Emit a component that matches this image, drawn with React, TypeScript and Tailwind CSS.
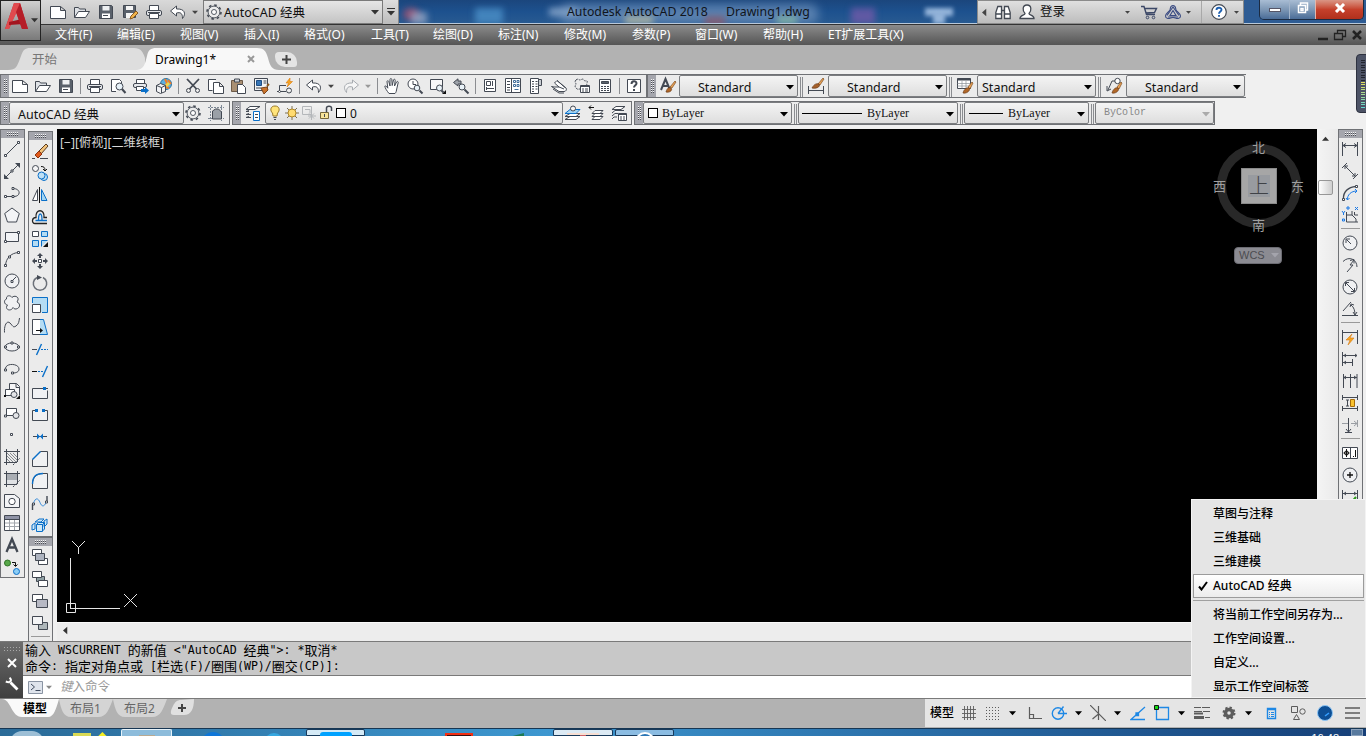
import type { ReactNode } from "react";
import clsx from "clsx";

const INK = "#434953";
const BLUE = "#0a6fc8";

const icons: Record<string, ReactNode> = {
  new: <path d="M.5 2.5h10l5 4v8H.5zM10.5 2.5v4h5" fill="#fff" />,
  open: (
    <>
      <path d="M.5 13.5v-10h4l1 1.500h6v3" fill="#dfe2e6" />
      <path d="M.5 13.500 4.500 7.500h11l-4 6z" fill="#fff" />
    </>
  ),
  save: (
    <>
      <path d="M1.500 1.500h12l1 1v12h-13z" fill="#5a616b" />
      <path d="M4.500 2h7v4.500h-7z" fill="#eef0f2" stroke="none" />
      <path d="M4 9.500h8V14H4z" fill="#fff" stroke="none" />
      <path d="M5 11.500h5" />
    </>
  ),
  saveAs: (
    <>
      <path d="M1.500 1.500h12v12h-12z" fill="#5a616b" />
      <path d="M4 2h7v4H4zM4 9h7v5H4z" fill="#f5f5f5" stroke="none" />
      <path d="m8 15 1-3 5-5 2 2-5 5z" fill="#f0b44c" stroke="#8a5a20" />
    </>
  ),
  print: (
    <>
      <path d="M3.500 6V1.500h9V6" fill="#fff" />
      <rect x=".5" y="6.500" width="15" height="5" rx="1.500" fill="#e7e9ec" />
      <path d="M3.500 9.500h9v5h-9z" fill="#fff" />
      <path d="M2 8.500h12" />
    </>
  ),
  preview: (
    <>
      <path d="M11.500 6V3.500l-2-2h-8v12H6" fill="#fff" />
      <circle cx="9.500" cy="8.500" r="3.500" fill="#e7f1f8" />
      <path d="m12 11 3.500 4" strokeWidth="2" />
    </>
  ),
  plot: (
    <>
      <path d="M3.500 5V1.500h8V5" fill="#fff" />
      <rect x=".5" y="5.500" width="13" height="4" rx="1.500" fill="#e7e9ec" />
      <path d="M3.500 8.500h7v4h-7z" fill="#fff" />
      <path d="M8 11h4V9l4 3.500-4 3.500v-2H8z" fill={BLUE} stroke="none" />
    </>
  ),
  publish: (
    <>
      <circle cx="10" cy="6" r="5.500" fill="#5eb0e0" stroke="#2574a6" />
      <path d="M9 1l2 4-2 4 4 1M12 2l3 4" stroke="#f07c28" strokeWidth="2" />
      <path d="M10 8l3-3" stroke="#ecd44a" strokeWidth="3" />
      <path d="m.5 7.500 4-2 5 2v6l-5 2-4-2zM.5 7.500l5 2v5.500M5.500 9.500l4-2" fill="#f1f2f4" />
    </>
  ),
  cut: (
    <>
      <path d="m2 1 9.500 10M14 1 4.500 11" strokeWidth="1.800" />
      <circle cx="3.500" cy="12.500" r="2" />
      <circle cx="12.500" cy="12.500" r="2" />
    </>
  ),
  copy: (
    <>
      <path d="M8 1.500H.5v11h4" fill="#fff" />
      <path d="M5.500 4.500h6l4 4v7h-10zM11.500 4.500v4h4" fill="#fff" />
    </>
  ),
  paste: (
    <>
      <path d="M.5 2.500h11v11H.5z" fill="#a98f72" stroke="#6c5a48" />
      <path d="M3.500 1h5v3h-5z" fill="#cfd3d8" />
      <path d="M6.500 6.500h5l3 3v6h-8z" fill="#fff" />
    </>
  ),
  match: (
    <>
      <path d="M.5.5h13v12H.5z" fill="#f1f3f5" />
      <path d="M2.500 2.500h5v5h-5z" fill="#3675b5" stroke="#1d4d84" />
      <path d="M9.500 3h3M9.500 5h3M2 10h5" />
      <path d="m13 8 2-2" stroke="#8a5a20" strokeWidth="2" />
      <path d="M7 10l6-1 1 3-4 4z" fill="#c9732a" stroke="#7c441a" />
    </>
  ),
  blockEdit: (
    <>
      <path d="M9 7.500H2.500v6H9M2.500 13.500H0" />
      <circle cx="2.500" cy="13.500" r="1" fill="#fff" />
      <circle cx="12" cy="12.500" r="2.500" fill="#eee" />
      <path d="m13 0-4 5h2.500L10 9l5.500-5.500H13z" fill="#f7a521" stroke="#d87b10" strokeWidth=".6" />
    </>
  ),
  undo: <path d="M6.500 2 .5 7l6 5V9c4-1 6 0 6 5.500 4-5 2-10-6-9.500z" fill="#fff" />,
  redo: <path d="M9.500 2l6 5-6 5V9c-4-1-6 0-6 5.500-4-5-2-10 6-9.500z" fill="#f6f6f6" stroke="#a7abb0" />,
  pan: (
    <path
      d="M5 15.500C3 13 1 10 .8 8.200c.8-.7 2 .3 3 2L3 3.500C3 2.500 4.500 2.500 4.800 3.500L6 8V1.500c0-1.300 1.700-1.300 1.800 0L8.200 7.500 9.500 2c.3-1.200 1.900-.9 1.700.4L10.500 8l2-4c.6-1 2-.5 1.700.6L12.500 12c-.2 2-1 3-1.500 3.500z"
      fill="#fff"
    />
  ),
  zoomRt: (
    <>
      <circle cx="6" cy="6" r="5" fill="#fff" />
      <path d="M6 3v3.500h3" />
      <circle cx="10" cy="10" r="2.800" fill="#e9f2f8" />
      <path d="m12.500 12.500 3 3" strokeWidth="2" />
    </>
  ),
  zoomWin: (
    <>
      <path d="M.5 1.500h12v10H.5z" fill="#f7f7f8" />
      <circle cx="9.500" cy="10" r="3" fill="#e9f2f8" />
      <path d="m11.500 12.500 2 2" strokeWidth="2" />
      <path d="M16 12v4h-4z" fill="#111" stroke="none" />
    </>
  ),
  zoomPrev: (
    <>
      <path d="M5 .8.5 4.500 5 8V6h3V3H5z" fill="#9da2a9" />
      <circle cx="9" cy="9" r="3" fill="#e9f2f8" />
      <path d="m11.500 11.500 4 4" strokeWidth="2" />
    </>
  ),
  props: (
    <>
      <path d="M2.500 1.500h11v12h-11z" fill="#fff" />
      <path d="M4.500 3.500h4v4h-4zM10.500 3v5M4 10.500h8M4.500 9v3" />
    </>
  ),
  designCenter: (
    <>
      <path d="M.5.5h15v14H.5zM6.500.5v14" fill="#fff" />
      <path d="M2 3.500h3M2 6.500h3M2 9.500h3M2 12h3" />
      <path d="M8.500 2.500h2v2h-2zM12 2.500h2v2h-2zM8.500 6.500h2v2h-2zM12 6.500h2v2h-2zM9.500 11.500h4" stroke="#3f6c9a" />
    </>
  ),
  palettes: (
    <>
      <path d="M2.500.5h8v15h-8z" fill="#fff" />
      <path d="M10.500 1.500h3v6h-3z" fill="#c9cdd2" />
      <path d="M4 3.500h2M7.500 3.500h2M4 6h2M7.500 6h2M4 8.500h2M7.500 8.500h2M4 11h2M7.500 11h2M4 13.500h2" />
    </>
  ),
  sheetSet: (
    <>
      <path d="M.5 8.500 8 13.500h5c2 0 3-2 2-3.500L6 2.500 3.500 5 8 9H3z" fill="#fff" />
      <path d="m6 2.500 8 7M2 11l6 4h5M8 9l5 2" />
    </>
  ),
  markup: (
    <>
      <path d="M2 2c2-2 3 0 4 0s3-2 4 0 2 0 3 1-1 3 0 4M2 2c-2 2 0 3 0 4s-2 2 0 4 2 1 4 1" strokeDasharray="2 1" />
      <path d="M6.500 7.500h9v7h-9z" fill="#fff" />
      <path d="M6.500 8.500h9M8 11h2M11 11h3M8 13h2M11 13h3" />
    </>
  ),
  calc: (
    <>
      <path d="M2.500 1.500h11v13h-11z" fill="#fff" />
      <path d="M4.500 3.500h7v2h-7z" fill="#59616b" />
      <path d="M4 8.500h8M4 10.500h8M4 12.500h8" strokeDasharray="2 1" />
    </>
  ),
  help: (
    <>
      <path d="M1.500 1.500h13v13h-13z" fill="#fff" />
      <path d="M5.500 6c0-3.500 5-3.500 5-.500 0 1.500-2.500 2-2.500 4M8 11v2" strokeWidth="2" />
    </>
  ),
  textStyle: (
    <>
      <path d="M1 12 5.500 1l4.500 11M3 8h5" strokeWidth="2" />
      <path d="m10 9 5-6 1 1-4 6z" fill="#e9a256" stroke="#7d4c20" strokeWidth=".7" />
      <path d="M6 14c1-4 3-5 5-4 2 2-1 5-5 4z" fill="#b06728" stroke="#6b3a15" strokeWidth=".7" />
    </>
  ),
  dimStyle: (
    <>
      <path d="M.5 8v8M15.500 8v8M1 12.500h14" />
      <path d="m10 6 5-6 1 1-4 6z" fill="#e9a256" stroke="#7d4c20" strokeWidth=".7" />
      <path d="M4 10c2-4 5-5 7-4 2 3-3 5-7 4z" fill="#a4602a" stroke="#6b3a15" strokeWidth=".7" />
    </>
  ),
  tableStyle: (
    <>
      <path d="M.5.5h13v10H.5z" fill="#fff" />
      <path d="M.5 1.500h13" strokeWidth="2" />
      <path d="M.5 5.500h13M.5 8h13M5 3v7.500M9 3v7.500" strokeWidth=".7" stroke="#8b9097" />
      <path d="m11 9 4-5 1 1-3 6z" fill="#e9a256" stroke="#7d4c20" strokeWidth=".7" />
      <path d="M6 15c1-4 4-6 6-5 2 2-2 6-6 5z" fill="#b06728" stroke="#6b3a15" strokeWidth=".7" />
    </>
  ),
  leaderStyle: (
    <>
      <circle cx="11.500" cy="3" r="2.700" fill="#fff" />
      <path d="M9 3H6L2 12M1 8v5l4-2" />
      <path d="m11 9 4-5 1 1-3 6z" fill="#e9a256" stroke="#7d4c20" strokeWidth=".7" />
      <path d="M6 15c1-4 4-6 6-5 2 2-2 6-6 5z" fill="#b06728" stroke="#6b3a15" strokeWidth=".7" />
    </>
  ),
  gear: (
    <>
      <circle cx="8" cy="8" r="7" strokeDasharray="2.600 2.900" strokeWidth="1.600" />
      <circle cx="8" cy="8" r="5.900" fill="#ececec" strokeWidth=".9" />
      <circle cx="8" cy="8" r="2.500" fill="#fff" strokeWidth=".9" />
    </>
  ),
  wsSave: (
    <>
      <path d="M2.500 0v16M13.500 0v16M0 2.500h16M0 13.500h16" strokeDasharray="2 1" stroke="#7c8794" />
      <path d="M4.500 14V6l3-2h3l3 3v7z" fill="#9aa0a7" />
    </>
  ),
  layerProps: (
    <>
      <path d="M15 1.500H5l-4 3h9zM4 6.500H1l3-1M1 9.500h5M4 8.500l-3 1M1 12.500h5M4 11.500l-3 1" fill="#fff" />
      <path d="M8.500 6.500h6v9h-6z" fill="#fff" stroke={BLUE} />
      <path d="M10 9.500h3M10 12.500h3" />
    </>
  ),
  layerCur: (
    <>
      <path d="m0 14.500 5-3h10l-4 3zM0 11.500l5-3h10l-4 3z" fill="#fff" />
      <path d="m0 8.500 5-4h10l-4 4z" fill="#9fd2f2" stroke={BLUE} />
      <circle cx="8" cy="3.500" r="2.500" fill="#f4f4f4" />
    </>
  ),
  layerPrev: (
    <>
      <path d="m4 14.500 3-3h8l-3 3zM4 11.500l3-3h8l-3 3zM4 8.500l3-3h8l-3 3z" fill="#fff" />
      <path d="M6 2.500H1M3 .5l-2 2 2 2" stroke="#111" />
    </>
  ),
  layerState: (
    <>
      <path d="M14 1.500H5l-4 3h9zM1 8l3-2.500h9M1 11l3-2.500h3M1 14l2-2h3" fill="#fff" />
      <path d="M7.500 8.500h8v7h-8z" fill="#fff" />
      <path d="M7.500 9.500h8M9 12h2M12 12h2M9 14h2M12 14h2" />
    </>
  ),
  bulb: (
    <>
      <path d="M8 1c5 0 5 5 2.500 7l-.5 3H6l-.5-3C3 6 3 1 8 1z" fill="#ffe47a" stroke="#9b7b2a" />
      <path d="M6.500 12.500h3M7 14.500h2" />
    </>
  ),
  sun: (
    <>
      <path d="M8 1v14M1 8h14M3 3l10 10M13 3 3 13" stroke="#7d7256" />
      <circle cx="8" cy="8" r="4" fill="#ffdb70" stroke="#b28824" />
    </>
  ),
  vpFreeze: (
    <g stroke="#b4b7ba">
      <path d="M1.500 1.500h9v8h-9zM4 4.500h5v4" />
      <path d="M10.500 7v8M7 11h8M8 8.500l5 5M13 8.500l-5 5" />
    </g>
  ),
  lock: (
    <>
      <path d="M8.500 7V3c0-2.500 5-2.500 5 0v3" strokeWidth="1.500" />
      <path d="M2.500 7.500h8v6h-8z" fill="#f8e49a" stroke="#77673a" />
      <path d="M6.500 9v3" />
    </>
  ),
  line: (
    <>
      <path d="M2 14 14 2" />
      <path d="M.5 13.500h2v2h-2zM13.500.5h2v2h-2z" fill="#fff" />
    </>
  ),
  xline: (
    <>
      <path d="M1 15 15 1" />
      <path d="M0 16v-5l5 5zM16 0v5l-5-5z" fill={INK} stroke="none" />
      <path d="M7 7h2v2H7z" fill="#fff" />
    </>
  ),
  pline: (
    <>
      <path d="M2 11.500h7M9 3.500c8 0 8 8 1 8" />
      <path d="M.5 10.500h2v2h-2zM8 10.500h2v2H8zM8 2.500h2v2H8z" fill="#fff" />
    </>
  ),
  polygon: <path d="m8 1 7.300 5.500-2.800 8.500h-9L.7 6.500z" fill="#f3f4f6" />,
  rect: (
    <>
      <path d="M1.500 3.500h13v9h-13z" fill="#f3f4f6" />
      <path d="M.5 11.500h2v2h-2zM13.500 2.500h2v2h-2z" fill="#fff" />
    </>
  ),
  arc: (
    <>
      <path d="M1.500 14.500C2 7 7 2 14.500 1.500" />
      <path d="M.5 13.500h2v2h-2zM4.500 5h2v2h-2zM13.500.5h2v2h-2z" fill="#fff" />
    </>
  ),
  circle: (
    <>
      <circle cx="8" cy="8" r="7" fill="#f0f1f3" />
      <path d="m8 8 4-4M7 7.500h2v2H7z" />
    </>
  ),
  revcloud: (
    <path
      d="M8 2.500c2-2.500 7-1 6 2.500-.2 1-1 1.500-1 2 3 1 3.500 5 .500 6.500-2 1-3.500.500-4.500-1-1 3-6 3.500-6.500 0 0-1 .500-2 1-2.500C0 9.500-.500 5 2.500 4 2 0 6.500 0 8 2.500z"
      fill="#f0f1f3"
    />
  ),
  spline: <path d="M.5 15.500C0 8 3 3 6 6s3 5 6 3 3-5 3.500-8" />,
  ellipse: (
    <>
      <ellipse cx="8" cy="8" rx="7" ry="4" fill="#f0f1f3" />
      <path d="M.5 7h2v2h-2zM7 3h2v2H7zM13.500 7h2v2h-2z" fill="#fff" />
    </>
  ),
  ellipseArc: (
    <>
      <path d="M1.500 9C0 1.500 15 2 15 8c0 3-3 4-6 4" />
      <path d="M.5 8h2v2h-2zM7.500 11h2v2h-2z" fill="#fff" />
    </>
  ),
  insert: (
    <>
      <path d="M5.500 7V.5h7l3 3V12M12 .5v4h3" fill="#f5f5f6" />
      <path d="M1.500 6.500h9v6h-9z" fill="#fff" />
      <circle cx="10" cy="11.500" r="3" fill="#e4e5e8" />
      <path d="M16 12v4h-4zM0 12h2v2H0z" fill="#111" stroke="none" />
    </>
  ),
  block: (
    <>
      <path d="M2.500 3.500h10v7h-10z" fill="#fff" />
      <circle cx="12" cy="10.500" r="3" fill="#e4e5e8" />
      <path d="M.5 10h2v2h-2z" fill="#fff" />
    </>
  ),
  point: <path d="M6.500 6.500h2v2h-2z" fill="#fff" />,
  hatch: (
    <>
      <path d="M2.500 0v16M13.500 0v13M0 2.500h16M0 13.500h13" />
      <path d="m3 10 3 3M3 7l6 6M3 4l9 9M6 4l7 7M9 4l4 4" strokeWidth=".6" />
      <path d="m9 16 7-7" strokeDasharray="2 1" />
    </>
  ),
  gradient: (
    <>
      <path d="M2.500 2.500h11v11h-11z" fill="#a9adb3" stroke="none" />
      <path d="M3 9h10v4H3z" fill="#dfe1e4" stroke="none" />
      <path d="M2.500 0v16M13.500 0v13M0 2.500h16M0 13.500h13" />
      <path d="m9 16 7-7" strokeDasharray="2 1" />
    </>
  ),
  region: (
    <>
      <path d="M.5 1.500h10l5 4v9H.5z" fill="#f3f4f6" />
      <circle cx="8" cy="8.500" r="3.200" fill="#fff" />
    </>
  ),
  table: (
    <>
      <path d="M.5.500h15v15H.5z" fill="#fff" />
      <path d="M1 1h14v3H1z" fill="#8f93a6" stroke="none" />
      <path d="M.5 4.500h15" />
      <path d="M1 8h14M1 11.500h14M5.500 5v10M10.500 5v10" stroke="#a2a6ac" />
    </>
  ),
  mtext: <path d="M2.500 15 8 2l5.500 13M4.500 10.500h7" strokeWidth="2.300" />,
  addSel: (
    <>
      <circle cx="3.500" cy="4" r="3" fill="#58a84a" stroke="#2f7426" />
      <circle cx="12.500" cy="12.500" r="3" fill="#8ccdf5" stroke={BLUE} />
      <path d="M8 3.500h3.500V7M9.500 5.500l2 2 2-2" stroke="#111" />
    </>
  ),
  erase: (
    <>
      <path d="m6 9 8-8 2 2-7 8z" fill="#f2c27a" stroke="#5b3d20" />
      <path d="m3 12 4-4 3 3-4 4z" fill="#e05a1b" stroke="#8b3210" />
      <path d="M0 15.500h3M8 15.500h8" />
    </>
  ),
  copyObj: (
    <>
      <circle cx="3.500" cy="3.500" r="3" fill="#f4f4f5" />
      <path d="M9 1.500c3 0 4 1 4 4M11 4l2 2 2-2" stroke="#111" />
      <g stroke={BLUE} fill="#bfe0f5">
        <circle cx="12" cy="12" r="3.500" />
        <circle cx="9.500" cy="10.500" r="3.500" />
      </g>
    </>
  ),
  mirror: (
    <>
      <path d="M.5 13.500h5v-11z" fill="#fff" />
      <path d="M7.500 0v16" stroke="#111" />
      <path d="M15 13.500H9.500v-11z" fill="#a4d5f2" stroke={BLUE} />
    </>
  ),
  offset: (
    <>
      <path d="M15 14.500H3C-.500 14.500-.500 8.500 4 8.500c-1-9 9-9 8 0h3" strokeWidth="1.300" stroke="#222" />
      <path d="M15 11.500H3.500M6.500 11c0-8 3.500-8 3.500 0" stroke={BLUE} strokeWidth="1.300" />
    </>
  ),
  array: (
    <>
      <path d="M.5.500h6v5h-6z" fill="#fff" />
      <path d="M9.500.500h6v5h-6zM.5 9.500h6v6h-6zM9.500 15.500v-6h6" fill="#b5dcf3" stroke={BLUE} />
      <path d="M16 11v5h-5z" fill="#111" stroke="none" />
    </>
  ),
  move: (
    <>
      <path d="M6.500 6.500h3v3h-3z" fill="#fff" />
      <path d="m8 0 3 3H9v2H7V3H5zM8 16l3-3H9v-2H7v2H5zM0 8l3-3v2h2v2H3v2zM16 8l-3-3v2h-2v2h2v2z" fill={INK} stroke="none" />
    </>
  ),
  rotate: (
    <>
      <path d="M5 2.500a6.700 6.700 0 1 0 6 0" stroke="#6b7078" strokeWidth="1.500" />
      <path d="m5 0 5 2.500L5 5z" fill={INK} stroke="none" />
    </>
  ),
  scale: (
    <>
      <path d="M.5 6V.500h15v15H10" fill="#b5dcf3" stroke={BLUE} />
      <path d="M.5 7.500h8v8h-8z" fill="#fff" />
    </>
  ),
  stretch: (
    <>
      <path d="M7.500.500h4l4 15h-8z" fill="#b5dcf3" stroke={BLUE} />
      <path d="M8 .5H.5v15H8" fill="#fff" />
      <path d="M4 11.500h5" stroke="#111" />
      <path d="m8 9 3 2.500L8 14z" fill="#111" stroke="none" />
    </>
  ),
  trim: (
    <>
      <path d="M0 8.500h5" />
      <path d="M9 8.500h7" strokeDasharray="2 1" stroke={BLUE} />
      <path d="M4.500 14 9.500 3" stroke={BLUE} strokeWidth="1.400" />
    </>
  ),
  extend: (
    <>
      <path d="M0 8.500h5" stroke="#111" />
      <path d="M6 8.500h5" strokeDasharray="2 1" stroke={BLUE} />
      <path d="M10.500 14 15.500 3" stroke={BLUE} strokeWidth="1.400" />
    </>
  ),
  breakPt: (
    <>
      <path d="M16 3.500H.500v10h15v-8" fill="#f0f1f3" />
      <path d="M11 2h3v3h-3z" fill={BLUE} stroke="none" />
    </>
  ),
  breakObj: (
    <>
      <path d="M4 3.500H.500v10h15v-10H12" fill="#f0f1f3" />
      <path d="M3 2h3v3H3zM10 2h3v3h-3z" fill={BLUE} stroke="none" />
    </>
  ),
  join: (
    <>
      <path d="M1 7.500h14" />
      <path d="m5 4.500 3 3-3 3zM11 4.500l-3 3 3 3z" fill={BLUE} stroke="none" />
    </>
  ),
  chamfer: (
    <>
      <path d="M8.500.500h7v15H.500V8.500z" fill="#f0f1f3" />
      <path d="m.5 8.500 8-8" stroke={BLUE} strokeWidth="1.400" />
    </>
  ),
  fillet: (
    <>
      <path d="M11 .5h4.500v15H.500V11C.500 5 4 .500 11 .500z" fill="#f0f1f3" />
      <path d="M.5 11C.500 4 4 .500 11 .500" stroke={BLUE} strokeWidth="1.400" />
    </>
  ),
  blend: (
    <>
      <path d="M.5 15V9M15 7V1" strokeWidth="1.400" />
      <path d="M1.500 8.500c2-7 5-5 6.500-1s4 5 6 0" stroke="#3c8fdc" />
      <path d="M.5 8h2v2h-2zM13.500 6h2v2h-2z" fill="#fff" />
    </>
  ),
  explode: (
    <g stroke={BLUE} fill="#cfe8f7">
      <path d="m3 5 4-3h5L9 5zM12 4l3-2v5l-3 3zM0 8l3-2v6l-3 1z" />
      <path d="M4.500 7.500h6v7h-6zM4.500 7.500l2-2h6l-2 2M10.500 14l2-2V6" />
    </g>
  ),
  front: (
    <>
      <path d="M.5 .5h9v6h-9zM6.500 9.500h9v6h-9z" fill="#fff" />
      <path d="M3.500 4.500h9v7h-9z" fill="#aeb4c0" />
    </>
  ),
  back: (
    <>
      <path d="M4.500 5.500h8v5h-8z" fill="#8fa0a4" />
      <path d="M.5.500h9v6h-9zM6.500 9.500h9v6h-9z" fill="#fff" />
    </>
  ),
  above: (
    <>
      <path d="M.5 1.500h10v7H.500z" fill="#fff" />
      <path d="M4.500 6.500h11v8h-11z" fill="#b7b9c4" />
    </>
  ),
  under: (
    <>
      <path d="M6.500 7.500h9v7h-9z" fill="#aeb7ba" />
      <path d="M.5 1.500h10v8H.500z" fill="#f4f5f6" />
    </>
  ),
  dimLinear: <path d="M.5 1v14M15.500 1v14M1 4.500h14M4 2.500l-3 2 3 2M12 2.500l3 2-3 2" />,
  dimAligned: <path d="m2 2 12 12M0 5l5-5M11 16l5-5M3 6V3h3M10 13h3v-3" />,
  dimArc: (
    <>
      <path d="M1.500 14C1 7 6 2 14 1.500" strokeWidth="1.400" />
      <path d="M.5 13.500h2v2h-2zM13.500.500h2v2h-2z" fill="#fff" />
      <path d="M5.500 15C5 10 9 6 15 6M4 13l1.500 2 2-2M13 4l2 2-2 2" stroke="#1979e6" />
    </>
  ),
  ordinate: (
    <>
      <path d="M4.500 5v10H16M5 8h5V4M10 8l4 4v3M12.500 5v3H16" />
      <path d="m0 4 1.500 2L3 4M1.500 6v2M13 0l3 3M16 0l-3 3M5 0h2v2H5zM.5 12h2v2h-2z" stroke="#1979e6" />
    </>
  ),
  dimRadius: (
    <>
      <circle cx="8" cy="8" r="7" fill="#f0f1f3" />
      <path d="M9 9 4.500 4.500M4 8V4h4" />
    </>
  ),
  dimJog: <path d="M1 4.500c6-6 14-2 14 5.500M12 3l-4 5h3l-6 7M8 3.500l4-1v4" />,
  dimDiam: (
    <>
      <circle cx="8" cy="8" r="7" fill="#f0f1f3" />
      <path d="m3.500 3.500 9 9M3.500 7V3.500H7M9 12.500h3.500V9" />
    </>
  ),
  dimAng: <path d="M0 14.500h16M1 10 9 1M9 4c3 2 4 6 4 10M8 6l1-3 3 1M11 11l2 3 2-3" />,
  dimQuick: (
    <>
      <path d="M.5 1v14M15.500 1v14M1 3.500h14" />
      <path d="m10 5-6 6h4l-2 5 6-7H8z" fill="#f7a521" stroke="#d87b10" strokeWidth=".6" />
    </>
  ),
  dimBase: <path d="M.5 1v14M1 4.500h14M1 11.500h9M10.500 8v7M13 3l2 1.500L13 6M4 3 2 4.500 4 6M4 10l-2 1.500L4 13" />,
  dimCont: <path d="M1.500 1v14M8.500 1v14M15 1v14M1 4.500h14M4 3 2 4.500 4 6M12 3l2 1.500L12 6" />,
  dimSpace: (
    <>
      <path d="M.5 0v5M15.500 0v5M.500 11v5M15.500 11v5M1 2.500h14M1 13.500h14M5.500 5v6M4 5h3M4 11h3" />
      <path d="M8.500 4.500h4v7h-4z" fill="#f9c22e" stroke="#a86d0a" />
    </>
  ),
  dimBreak: (
    <>
      <path d="M0 6.500h6M9 6.500h6M12 4l3 2.500L12 9M15.500 3v7" stroke="#999da3" />
      <path d="M6.500 1v14M3 15.500h7M4 12l2.500 3L9 12" />
    </>
  ),
  tolerance: (
    <>
      <path d="M.5 2.500h15v11H.500zM8.500 2.500v11" fill="#fff" />
      <path d="M4.500 4v8M1.500 8h6M11 11.500h1M13.500 5v7" stroke="#111" />
      <circle cx="4.500" cy="8" r="2" stroke="#111" />
    </>
  ),
  centerMark: (
    <>
      <circle cx="8" cy="8" r="7" fill="#f0f1f3" />
      <path d="M8 5v6M5 8h6" stroke="#111" strokeWidth="1.300" />
    </>
  ),
  dimInspect: (
    <>
      <path d="M.5 1v14M15.500 1v14M1 4.500h14M4 3 2 4.500 4 6M12 3l2 1.500L12 6" />
      <path d="m7 11 2 3 5-6" stroke="#2c9a1a" strokeWidth="2" />
    </>
  ),
  binoculars: (
    <path d="M.8 14.500v-6l2-6h3.700v12zM9.500 14.500v-12h3.700l2 6v6zM6.500 6.500h3M.8 10h5.700M9.500 10h5.700" fill="#fff" strokeWidth="1.300" />
  ),
  user: (
    <path d="M8 1c5 0 4.500 6 2 8.500 0 2 5 1.500 5 5H1c0-3.500 5-3 5-5C3.500 7 3 1 8 1z" fill="#fff" strokeWidth="1.300" />
  ),
  cart: (
    <>
      <path d="M0 2.500h3l2.500 8H14M3.500 4.500h12l-2 4-9 .5" stroke="#3c4867" strokeWidth="1.400" />
      <circle cx="6.500" cy="13.500" r="1.300" stroke="#3c4867" />
      <circle cx="12.500" cy="13.500" r="1.300" stroke="#3c4867" />
    </>
  ),
  a360: (
    <g stroke="#3b4c83" strokeWidth="1.100">
      <path d="M8 1.500c3 0 2.500 3 3 4.500s4.500 3.500 4.500 6-3 3-5 2c-1-.700-4-.700-5 0-2 1-5 .500-5-2S4.500 7.500 5 6 5 1.500 8 1.500z" />
      <path d="m8 6.500 3 5H5zM2 11.500 8 3l6 8.500M3 13h10" />
    </g>
  ),
  helpRound: (
    <>
      <circle cx="8" cy="8" r="7.300" fill="#fff" strokeWidth="1.200" />
      <path d="M5.500 6c0-3 5-3 5-.300C10.500 7.500 8 7.500 8 9.700M8 11v1.800" stroke="#1c5fb0" strokeWidth="1.900" />
    </>
  ),
};

function Icon({ name, className }: { name: string; className?: string }) {
  return (
    <svg viewBox="0 0 16 16" fill="none" stroke={INK} className={clsx("size-4 shrink-0 overflow-visible", className)}>
      {icons[name]}
    </svg>
  );
}

function Caret({ className }: { className?: string }) {
  return (
    <svg viewBox="0 0 8 5" fill="currentColor" className={clsx("h-[5px] shrink-0", className, !className?.includes("w-") && "w-2")}>
      <path d="M0 0h8L4 4.500z" />
    </svg>
  );
}

function Grip({ vertical = false }: { vertical?: boolean }) {
  return (
    <div className={clsx("flex shrink-0 items-center justify-center bg-[#a5a6ad]", vertical ? "h-2 w-full" : "h-full w-2")}>
      <div
        className={clsx(
          "bg-[#4c4e55] bg-[linear-gradient(90deg,#a5a6ad_1px,transparent_1px),linear-gradient(#f4f4f4_1px,transparent_1px)] bg-[length:2px_2px]",
          vertical ? "h-1 w-[13px]" : "h-3.5 w-[5px]",
        )}
      />
    </div>
  );
}

function Tools({ names }: { names: string[] }) {
  return names.map((n) => (
    <div key={n} className="flex w-[23px] shrink-0 items-center pl-px">
      <Icon name={n} />
    </div>
  ));
}

const Sep = () => <div className="my-[3px] w-1.5 shrink-0 border-l border-[#8b8d91]" />;
const DoubleSep = () => <div className="my-[2px] ml-0.5 mr-px h-5 w-[3px] shrink-0 border-x border-[#8b8d91]" />;

function Bar({ children, className }: { children: ReactNode; className?: string }) {
  return (
    <div className={clsx("flex h-6 shrink-0 items-stretch border border-[#6f7175] bg-[#ebebeb]", className)}>
      <Grip />
      {children}
    </div>
  );
}

function Combo({ children, className, caret = "text-black" }: { children: ReactNode; className?: string; caret?: string }) {
  return (
    <div className={clsx("flex shrink-0 items-center justify-between rounded-[2px] border border-[#7b7d80] bg-linear-to-b from-[#f4f4f4] to-[#dedede] pr-[3px]", className)}>
      {children}
      <Caret className={clsx("mt-0.5", caret)} />
    </div>
  );
}

function TitleBar() {
  return (
    <div className="flex h-6 shrink-0">
      <div className="flex h-6 w-[162px] items-center bg-linear-to-b from-[#d9d9d9] to-[#bdbdbd] pl-[9px]">
        {["new", "open", "save", "saveAs", "print", "undo"].map((n) => (
          <Icon key={n} name={n} className="mr-2" />
        ))}
        <Caret className="-ml-0.5 w-[6px] text-[#444]" />
      </div>
      <div className="flex w-[180px] items-center border border-[#7a7a7a] bg-linear-to-b from-[#e6e6e6] to-[#c4c4c4] pl-[2px] pr-[3px]">
        <Icon name="gear" />
        <span className="ml-0.5 mt-0.5 grow text-[12.500px]">AutoCAD 经典</span>
        <Caret className="text-[#333]" />
      </div>
      <div className="flex w-4 flex-col items-center justify-center gap-0.5 border-r border-[#888] bg-linear-to-b from-[#dedede] to-[#bcbcbc]">
        <div className="h-px w-2 bg-[#333]" />
        <Caret className="text-[#333]" />
      </div>
      <div className="relative flex w-[578px] items-center overflow-hidden border-b border-[#b9c9da] bg-linear-to-b from-[#1b467d] via-[#1d518e] to-[#285a91]">
        <div className="absolute left-1 top-2 h-3 w-4 rounded-full bg-[#a0506f]/80 blur-[3px]" />
        <div className="absolute left-3 top-3 h-3 w-4 bg-[#a4b0cc]/70 blur-[3px]" />
        <div className="absolute left-[76px] top-2 h-4 w-7 bg-[#4b90c8]/80 blur-[3px]" />
        <div className="absolute left-[150px] top-2 h-2 w-7 bg-[#92aed0]/80 blur-[3px]" />
        <div className="absolute left-[160px] top-1 h-5 w-[260px] rounded-full bg-[#7f9fc4]/60 blur-[5px]" />
        <div className="absolute left-[226px] top-4 h-2 w-7 bg-[#c5c3a0]/70 blur-[3px]" />
        <div className="absolute left-[306px] top-4 h-3 w-5 bg-[#8e5768]/70 blur-[3px]" />
        <div className="absolute left-[378px] top-4 h-2 w-5 bg-[#8fc3a4]/70 blur-[3px]" />
        <div className="absolute left-[452px] top-2 h-4 w-6 bg-[#6f5aa9]/80 blur-[3px]" />
        <div className="absolute left-[526px] top-2 h-2 w-7 bg-[#94b4da] blur-[2px]" />
        <div className="absolute left-[534px] top-3 h-3 w-3 bg-[#94b4da] blur-[2px]" />
        <span className="relative ml-[168px] mt-px w-[159px] whitespace-nowrap text-[12.300px] text-[#10151c]">Autodesk AutoCAD 2018</span>
        <span className="relative mt-px whitespace-nowrap text-[12.300px] text-[#10151c]">Drawing1.dwg</span>
      </div>
      <div className="flex w-[267px] items-center border border-[#8b8b8b] bg-linear-to-b from-[#e0e0e0] to-[#bdbdbd] pl-[2px]">
        <Caret className="w-2 rotate-90 text-[#444]" />
        <Icon name="binoculars" className="ml-[7px]" />
        <Icon name="user" className="ml-2" />
        <span className="ml-[5px] w-[85px] text-[12.500px]">登录</span>
        <Caret className="w-[5px] text-[#444]" />
        <Icon name="cart" className="ml-[11px]" />
        <Icon name="a360" className="ml-2" />
        <Caret className="ml-[5px] w-[5px] text-[#444]" />
        <div className="ml-2.5 h-full w-px bg-[#a8a8a8]" />
        <Icon name="helpRound" className="ml-[9px]" />
        <Caret className="ml-[7px] w-[5px] text-[#444]" />
      </div>
      <div className="flex grow justify-end border-b border-[#b9c9da] bg-[#2e5c94] pr-[2px]">
        <div className="flex h-5 w-[105px] overflow-hidden rounded-b-[5px] border border-t-0 border-[#1b2b42]">
          <div className="flex w-[29px] items-center justify-center bg-linear-to-b from-[#a9bdd4] via-[#7d97b5] to-[#4a6c97]">
            <div className="h-1 w-3 border border-[#556] bg-white" />
          </div>
          <div className="flex w-[26px] items-center justify-center border-l border-[#a3b5cb] bg-linear-to-b from-[#a9bdd4] via-[#7d97b5] to-[#4a6c97]">
            <svg viewBox="0 0 12 12" className="-mt-1 size-3" fill="none" stroke="#fff" strokeWidth="1.500">
              <path d="M3.500 3V1h7v7H9M1.500 3.500h7v7h-7zM4 6.500h2v2H4z" />
            </svg>
          </div>
          <div className="flex grow items-center justify-center border-l border-[#e3b7ac] bg-linear-to-b from-[#d99585] via-[#c5402b] to-[#b0301c]">
            <svg viewBox="0 0 12 10" className="-mt-1 h-2.5 w-3" fill="none" stroke="#fff" strokeWidth="3">
              <path d="m2 1 8 8M10 1 2 9" />
            </svg>
          </div>
        </div>
      </div>
    </div>
  );
}

const menus = [
  ["文件(F)", "w-[62px]"],
  ["编辑(E)", "w-[63px]"],
  ["视图(V)", "w-16"],
  ["插入(I)", "w-[60px]"],
  ["格式(O)", "w-[67px]"],
  ["工具(T)", "w-[62px]"],
  ["绘图(D)", "w-[65px]"],
  ["标注(N)", "w-[66px]"],
  ["修改(M)", "w-[68px]"],
  ["参数(P)", "w-[63px]"],
  ["窗口(W)", "w-[68px]"],
  ["帮助(H)", "w-[65px]"],
  ["ET扩展工具(X)", "w-[90px]"],
];

function Header() {
  return (
    <div className="flex h-[45px] shrink-0 bg-linear-to-b from-[#8d8d8d] from-55% to-[#555]">
      <div className="flex h-[41px] w-[41px] shrink-0 items-start border border-[#222] bg-linear-to-b from-[#d0d0d0] to-[#7a7a7a] pl-[3px] pt-px">
        <svg viewBox="0 0 26 28" className="h-7 w-[26px]">
          <path d="M1 27 10 1h6l8 26h-6l-6-17-4 10-3 7z" fill="#cc2731" />
          <path d="M10 1h6l-2 7-6 12-3 7H1z" fill="#e04a4e" />
          <path d="m5 20 13-3 2 5-15 1z" fill="#a3151f" />
          <path d="m16 1 8 26h-6L12 10z" fill="#b51e28" />
        </svg>
        <Caret className="ml-px mt-4 w-[7px] text-[#333]" />
      </div>
      <div className="flex grow flex-col">
        <TitleBar />
        <div className="flex grow items-center border-t border-[#333] pl-[14px]">
          {menus.map(([label, w]) => (
            <span key={label} className={clsx("shrink-0 whitespace-nowrap text-[12px] text-white", w)}>
              {label}
            </span>
          ))}
          <svg viewBox="0 0 46 12" className="ml-auto mr-[3px] h-3 w-[46px]" fill="none" stroke="#222">
            <path d="M1 10h10" strokeWidth="2.500" />
            <path d="M20.500 4V1.500h8v6H26M17.500 4.500h8v6h-8z" strokeWidth="1.300" />
            <path d="m36 2 8 8M44 2l-8 8" strokeWidth="2.500" />
          </svg>
        </div>
      </div>
    </div>
  );
}

function FileTabs() {
  return (
    <div className="flex h-[25px] shrink-0 items-end bg-[#b2b2b2]">
      <div className="relative h-[22px] w-[290px]">
        <svg viewBox="0 0 290 22" className="absolute inset-0 h-full w-full">
          <path d="M8 22c8 0 9-3 13-14 2-6 4-8 9-8h104c7 0 9 4 11 10v12z" fill="#dedede" />
          <path d="M137 22c7-1 8-6 10-14 1-6 4-8 9-8h101c7 0 9 3 11 10 2 8 4 12 11 12z" fill="#f8f8f8" />
        </svg>
        <div className="relative flex h-full items-center text-[12.500px]">
          <span className="ml-8 mt-0.5 w-[123px] text-[#777]">开始</span>
          <span className="mt-0.5 w-[92px] text-[12px] text-black">Drawing1*</span>
          <svg viewBox="0 0 8 8" className="size-2" stroke="#999" strokeWidth="2">
            <path d="m1 1 6 6M7 1 1 7" />
          </svg>
        </div>
      </div>
      <div className="-ml-[15px] mb-[3px] flex h-[15px] w-[22px] items-center justify-center rounded-[4px_10px_3px_10px] bg-[#e4e4e4]">
        <svg viewBox="0 0 9 9" className="size-[9px]" stroke="#444" strokeWidth="2">
          <path d="M4.500 0v9M0 4.500h9" />
        </svg>
      </div>
      <div className="grow" />
    </div>
  );
}

function Toolbars() {
  return (
    <div className="flex h-[59px] shrink-0 flex-col gap-[3px] bg-[#f0f0f0] pt-1">
      <div className="flex h-6">
        <Bar className="w-[647px]">
          <div className="w-0.5 shrink-0" />
          <Tools names={["new", "open", "save"]} />
          <Sep />
          <Tools names={["print", "preview", "plot", "publish"]} />
          <Sep />
          <Tools names={["cut", "copy", "paste", "match", "blockEdit"]} />
          <Sep />
          <Tools names={["undo"]} />
          <Caret className="w-1.5 self-center text-[#444]" />
          <div className="w-2 shrink-0" />
          <Tools names={["redo"]} />
          <Caret className="w-1.5 self-center text-[#999]" />
          <div className="w-[6px] shrink-0" />
          <Sep />
          <Tools names={["pan", "zoomRt", "zoomWin", "zoomPrev"]} />
          <Sep />
          <Tools names={["props", "designCenter", "palettes", "sheetSet", "markup", "calc"]} />
          <Sep />
          <div className="flex w-5 shrink-0 items-center pl-px">
            <Icon name="help" />
          </div>
        </Bar>
        <Bar className="w-[599px] border-r-0">
          {["textStyle", "dimStyle", "tableStyle", "leaderStyle"].map((n, i) => (
            <div key={n} className="flex">
              {i > 0 && <DoubleSep />}
              <div className={clsx("flex items-center justify-center", i > 0 ? "w-6" : "w-[23px]")}>
                <Icon name={n} />
              </div>
              <Combo className="w-[119px]">
                <span className={clsx("mt-[5px] text-[12.500px]", n === "tableStyle" ? "pl-1" : "pl-[18px]")}>Standard</span>
              </Combo>
            </div>
          ))}
        </Bar>
      </div>
      <div className="flex h-6 gap-0.5">
        <Bar className="w-[230px]">
          <Combo className="w-[175px]">
            <span className="mt-1 pl-2 text-[12.500px]">AutoCAD 经典</span>
          </Combo>
          <div className="w-[3px]" />
          <Tools names={["gear", "wsSave"]} />
        </Bar>
        <Bar className="w-[400px]">
          <div className="flex w-6 shrink-0 items-center justify-center">
            <Icon name="layerProps" />
          </div>
          <Combo className="w-[298px]">
            <span className="flex items-center gap-px pl-px">
              <Icon name="bulb" />
              <Icon name="sun" />
              <Icon name="vpFreeze" />
              <Icon name="lock" />
              <span className="ml-px size-2.5 border border-black bg-white" />
              <span className="ml-[3px] mt-px text-[12px]">0</span>
            </span>
          </Combo>
          <div className="w-0.5 shrink-0" />
          <div className="flex grow items-center gap-[7px]">
            <Icon name="layerCur" />
            <Icon name="layerPrev" />
            <Icon name="layerState" />
          </div>
        </Bar>
        <Bar className="w-[581px] font-['Liberation_Serif','Noto_Serif',serif] text-[12px]">
          <Combo className="w-[149px]">
            <span className="flex items-center gap-1 pl-1">
              <span className="size-2.5 border border-black bg-white" />
              ByLayer
            </span>
          </Combo>
          <DoubleSep />
          <Combo className="w-[160px]">
            <span className="flex items-center gap-[5px] pl-[3px]">
              <span className="h-px w-[60px] bg-black" />
              ByLayer
            </span>
          </Combo>
          <DoubleSep />
          <Combo className="w-[125px]">
            <span className="flex items-center gap-[5px] pl-1">
              <span className="h-px w-[34px] bg-black" />
              ByLayer
            </span>
          </Combo>
          <DoubleSep />
          <Combo className="grow" caret="text-[#aaa]">
            <span className="pl-2 font-['Liberation_Mono',monospace] text-[10px] text-[#888]">ByColor</span>
          </Combo>
        </Bar>
      </div>
    </div>
  );
}

const drawTools = [
  "line", "xline", "pline", "polygon", "rect", "arc", "circle", "revcloud", "spline", "ellipse",
  "ellipseArc", "insert", "block", "point", "hatch", "gradient", "region", "table", "mtext", "addSel",
];
const modifyTools = [
  "erase", "copyObj", "mirror", "offset", "array", "move", "rotate", "scale", "stretch", "trim",
  "extend", "breakPt", "breakObj", "join", "chamfer", "fillet", "blend", "explode",
];
const dimGroups = [
  ["dimLinear", "dimAligned", "dimArc", "ordinate"],
  ["dimRadius", "dimJog", "dimDiam", "dimAng"],
  ["dimQuick", "dimBase", "dimCont", "dimSpace", "dimBreak"],
  ["tolerance", "centerMark", "dimInspect"],
];

function Palette({ groups, className }: { groups: string[][]; className?: string }) {
  return (
    <div className={clsx("flex w-[25px] shrink-0 flex-col items-start border border-[#6f7175] bg-[#ebebeb]", className)}>
      <Grip vertical />
      {groups.map((group, i) => (
        <div key={i} className="flex flex-col pl-[3px]">
          {i > 0 && <div className="-ml-px mb-[3px] mt-[2px] h-px w-[19px] bg-[#999]" />}
          {group.map((n) => (
            <div key={n} className="flex h-[22px] items-center">
              <Icon name={n} />
            </div>
          ))}
        </div>
      ))}
    </div>
  );
}

function Canvas() {
  return (
    <div className="relative h-[493px] w-[1260px] overflow-hidden bg-black text-[#d8d8d8]">
      <span className="absolute left-[3px] top-2 whitespace-nowrap text-[12.200px]">[−][俯视][二维线框]</span>
      <svg viewBox="0 0 90 80" className="absolute left-1 top-[409px] h-20 w-[90px]" fill="none" stroke="#e6e6e6">
        <path d="M5.500 65.500h9v9h-9zM9.500 20v51M9.500 70.500H59M63 56l13 13M76 56 63 69M11 3l6.500 6.500L24 3M17.500 9v7" />
      </svg>
      <div className="absolute left-[1160px] top-[15px] size-[84px] rounded-full border-[9px] border-[#282828]" />
      <span className="absolute left-[1195px] top-[12px] text-[13px] text-[#a0a0a0]">北</span>
      <span className="absolute left-[1195px] top-[90px] text-[13px] text-[#a0a0a0]">南</span>
      <span className="absolute left-[1156px] top-[51px] text-[13px] text-[#a0a0a0]">西</span>
      <span className="absolute left-[1234px] top-[51px] text-[13px] text-[#a0a0a0]">东</span>
      <div className="absolute left-[1184px] top-[39px] flex size-9 items-center justify-center border border-[#8a8a8a] bg-[#a6a6a6]">
        <div className="flex size-[22px] items-center justify-center bg-[#989ba0] text-[20px] font-light leading-none text-[#3f4247]">上</div>
      </div>
      <div className="absolute left-[1177px] top-[118px] flex h-[17px] w-12 items-center rounded-[4px] border border-[#6c6c73] bg-[#8b8b92] pl-1 font-['Liberation_Sans',sans-serif] text-[11px] text-[#4b4b50]">
        WCS
        <Caret className="ml-[6px] text-[#a4a4ac]" />
      </div>
    </div>
  );
}

function Workspace() {
  return (
    <div className="flex h-[512px] shrink-0 bg-[#f0f0f0]">
      <div className="flex w-[57px] gap-[3px]">
        <Palette groups={[drawTools]} className="h-[449px]" />
        <div className="flex flex-col pt-0.5">
          <Palette groups={[modifyTools]} className="h-[406px]" />
          <Palette groups={[["front", "back", "above", "under"], []]} className="h-[104px] border-b-0" />
        </div>
      </div>
      <div className="flex flex-col">
        <Canvas />
        <div className="flex grow items-start border-t border-[#fafafa] bg-[#ededed] pl-1 pt-[3px]">
          <Caret className="mt-0.5 rotate-90 text-[#333]" />
        </div>
      </div>
      <div className="flex w-[21px] flex-col items-center bg-linear-to-r from-[#f4f4f4] to-[#eaeaea] pr-1">
        <Caret className="mt-[7px] w-[7px] rotate-180 text-[#333]" />
        <div className="mt-[39px] h-[15px] w-[15px] rounded-[2px] border border-[#979797] bg-linear-to-r from-white to-[#cfcfcf]" />
      </div>
      <Palette groups={dimGroups} />
    </div>
  );
}

// Latin runs sit on a 7px cell, CJK characters on a 13px one.
function CommandText({ text }: { text: string }) {
  return (
    <div className="flex h-4 items-center whitespace-pre text-[13px] leading-[15px] text-black">
      {text.split(/([\x20-\x7e]+)/).map((run, i) => (
        <span key={i} className={clsx(i % 2 === 1 && "font-['DejaVu_Sans_Mono',monospace] text-[11.600px]")}>
          {run}
        </span>
      ))}
    </div>
  );
}

function CommandLine() {
  return (
    <div className="flex h-[58px] shrink-0 border-y border-[#7a7a7a]">
      <div className="flex w-[23px] shrink-0 flex-col items-center bg-linear-to-b from-[#6d6d6d] to-[#3f3f3f] pt-1">
        <div className="h-[5px] w-[17px] bg-[radial-gradient(#aaa_40%,transparent_45%)] bg-[length:3px_3px]" />
        <svg viewBox="0 0 10 10" className="mt-[7px] size-2.5" stroke="#fff" strokeWidth="2">
          <path d="m1 1 8 8M9 1 1 9" />
        </svg>
        <svg viewBox="0 0 14 14" className="mt-[9px] size-3.5" fill="none" stroke="#fff">
          <path d="m5.500 5.500 7 7" strokeWidth="2.800" />
          <path d="M4.500.8c3 2 1 5.700-3.700 3.700" strokeWidth="2" />
        </svg>
      </div>
      <div className="flex grow flex-col">
        <div className="h-[34px] border-b border-[#7a7a7a] bg-[#c8c8c8] pl-[2px]">
          <CommandText text={'输入 WSCURRENT 的新值 <"AutoCAD 经典">: *取消*'} />
          <CommandText text="命令: 指定对角点或 [栏选(F)/圈围(WP)/圈交(CP)]:" />
        </div>
        <div className="flex grow items-center bg-white pl-[5px]">
          <svg viewBox="0 0 15 13" className="h-[13px] w-[15px]" fill="#dfe4ec" stroke="#8a94a3">
            <path d="M.5.500h14v12H.500z" />
            <path d="m3 3 3.500 3L3 9M7.500 9.500h5" fill="none" stroke="#3f4b5e" />
          </svg>
          <Caret className="ml-[3px] w-1.5 text-[#888]" />
          <span className="ml-2 text-[12.500px] text-[#999]">
            <i>键</i>入命令
          </span>
        </div>
      </div>
    </div>
  );
}

const statusPaths: Record<string, ReactNode> = {
  grid: <path d="M3.500 1v14M6.500 1v14M9.500 1v14M12.500 1v14M1 4.500h14M1 8.500h14M1 12.500h14" strokeWidth=".9" />,
  snap: <path d="M2 2.500h13M2 5.500h13M2 8.500h13M2 11.500h13M2 14.500h13" strokeDasharray="1 2" />,
  ortho: <path d="M2.500 2v11.500H15M2.500 9.500h4v4" strokeWidth="1.200" />,
  polar: (
    <g stroke="#1e88e5" strokeWidth="1.400">
      <circle cx="7" cy="8.500" r="5.700" />
      <path d="M7 8.500h9M7 8.500 12.500 1.500" />
    </g>
  ),
  iso: <path d="m0 0 16 16M8.500 1v14M8.500 9l-6 5" strokeWidth="1.200" />,
  track: (
    <g stroke="#1e88e5" strokeWidth="1.300">
      <path d="M15 2 1 14.500h14" />
      <path d="M6 8h2.500v2.500H6z" fill="#1e88e5" />
    </g>
  ),
  osnap: (
    <>
      <path d="M2.500 2.500h12v12h-12z" stroke="#1e88e5" strokeWidth="1.300" />
      <path d="M.5.500h4v4h-4z" fill="#15d815" stroke="#111" />
    </>
  ),
  lweight: (
    <>
      <path d="M0 2.500h7M8 2.500h8M9 6.500h7M0 6.500h8M11 12.500h5" strokeWidth="1.200" />
      <path d="M0 8.500h9" strokeWidth="2" />
      <path d="M0 12.500h10" strokeWidth="3" />
    </>
  ),
  gear: (
    <>
      <circle cx="8" cy="8" r="5.500" strokeDasharray="2.300 2" strokeWidth="2" />
      <circle cx="8" cy="8" r="3.500" strokeWidth="3.500" />
    </>
  ),
  quick: (
    <g stroke="#1e88e5">
      <path d="M4.500 3.500h8v10h-8zM4.500 4.500h8" strokeWidth="1.400" />
      <path d="M6 7.500h1M8 7.500h3M6 9.500h1M8 9.500h3M6 11.500h1M8 11.500h3" />
    </g>
  ),
  isolate: (
    <>
      <path d="M1.500 1.500h6v6h-6zM6.500 9.500l3 5h-6z" />
      <circle cx="12.500" cy="6.500" r="2.700" />
    </>
  ),
  perf: (
    <>
      <circle cx="8" cy="8" r="7.500" fill="#0d4f95" stroke="#8ec5f4" />
      <path d="m8 11 4-3" stroke="#35a0ff" strokeWidth="1.500" />
    </>
  ),
  menu: <path d="M1 3h15M1 8h15M1 13h15" strokeWidth="1.600" />,
};

const statusItems: [string, string][] = [
  ["grid", "w-[23px]"],
  ["snap", "w-[23px]"],
  ["caret", "w-[19px]"],
  ["ortho", "w-[26px]"],
  ["polar", "w-[22px]"],
  ["caret", "w-[16px]"],
  ["iso", "w-[23px]"],
  ["caret", "w-[16px]"],
  ["track", "w-[25px]"],
  ["osnap", "w-[23px]"],
  ["caret", "w-[16px]"],
  ["lweight", "w-[25px]"],
  ["gear", "w-[29px]"],
  ["caret", "w-[10px]"],
  ["quick", "w-[35px]"],
  ["isolate", "w-[19px]"],
  ["perf", "w-[36px]"],
  ["menu", "w-[18px]"],
];

function StatusBar() {
  return (
    <div className="flex h-[29px] shrink-0 items-start bg-[#b2b2b2]">
      <div className="relative h-[19px] w-[200px]">
        <svg viewBox="0 0 200 19" className="absolute inset-0 h-full w-full">
          <path d="M113 0c2 10 4 18 12 18h27c9 0 11-8 15-18z" fill="#d4d4d4" />
          <path d="M59 0c2 10 4 18 12 18h27c9 0 11-8 15-18z" fill="#d4d4d4" />
          <path d="M2 0c9 0 9 18 20 18h26c6 0 8-8 11-18z" fill="#fafafa" />
          <path d="M194 0c0 10-3 16-10 16h-10c-5 0-3-5-1-9s4-6 8-6z" fill="#e0e0e0" />
          <path d="M182 5v8M178 9h8" stroke="#444" strokeWidth="2" />
        </svg>
        <div className="relative flex pl-[23px] pt-px text-[12px] leading-[18px] text-[#666]">
          <span className="w-[47px] font-bold text-black">模型</span>
          <span className="w-[54px]">布局1</span>
          <span>布局2</span>
        </div>
      </div>
      <div className="ml-auto flex h-7 w-[441px] items-center bg-[#e5e5e5]">
        <span className="w-8 shrink-0 pl-[5px] text-[12px] font-medium text-black">模型</span>
        {statusItems.map(([name, w], i) => (
          <div key={i} className={clsx("flex shrink-0 items-center justify-center", w)}>
            {name === "caret" ? (
              <Caret className="w-[7px] text-black" />
            ) : (
              <svg viewBox="0 0 16 16" className="size-4 shrink-0" fill="none" stroke="#5c5c5c">
                {statusPaths[name]}
              </svg>
            )}
          </div>
        ))}
      </div>
    </div>
  );
}

function Taskbar() {
  return (
    <div className="flex h-2 shrink-0 overflow-hidden border-t border-[#173653] bg-linear-to-r from-[#2b6b98] via-[#3d97d0] via-40% to-[#163f78]">
      <div className="ml-[10px] mt-0.5 h-6 w-[34px] rounded-full bg-[#9dbfd6]" />
      <div className="ml-[29px] mt-1 h-3 w-[18px] bg-[#d9da55]" />
      <div className="ml-[6px] mt-1 h-3 w-2 rotate-45 bg-[#f6ef22]" />
      <div className="ml-[16px] flex w-[51px] justify-center rounded-t-[2px] border-x border-t border-[#e7f3fa] bg-[#8dbcdb] pt-1">
        <div className="mt-px h-2 w-4 bg-[#b9a990]" />
      </div>
      <div className="ml-[29px] mt-[3px] size-6 rounded-full bg-[#0e76d8]" />
      <div className="ml-[39px] mt-1 size-5 rounded-full bg-[#35a7e0]" />
      <div className="ml-[22px] flex w-[59px] justify-center rounded-t-[2px] border border-[#183a5b] bg-[#d5eaf6] pt-[2px]">
        <div className="h-3 w-8 rounded-[3px] bg-[#00a2ff]" />
      </div>
      <div className="ml-[80px] mt-1 h-4 w-7 border-2 border-[#f22f12] bg-[#3b1010]" />
      <div className="ml-[33px] mt-1 h-4 w-[18px] bg-[#1d7a52] [clip-path:polygon(0_30%,100%_0,100%_100%,0_100%)]" />
      <div className="ml-[29px] flex w-[60px] justify-center rounded-t-[2px] border border-[#183a5b] bg-[#dceaf4] pt-[3px]">
        <div className="flex w-8 justify-center bg-[#f8dfd3] pt-0.5">
          <div className="h-2 w-1.5 bg-[#cc6066]" />
        </div>
      </div>
      <div className="ml-[2px] flex w-[59px] justify-center rounded-t-[2px] border border-[#183a5b] bg-[#8bbce2] pt-[2px]">
        <div className="size-5 shrink-0 rounded-full border-2 border-white bg-[#2b76b5]" />
      </div>
      <span className="ml-auto mr-[37px] mt-[3px] font-['Liberation_Sans',sans-serif] text-[11px] leading-3 text-white">16:48</span>
      <div className="-ml-[25px] mr-[3px] w-3 shrink-0 border border-[#8ba2bd] bg-[#57799e]" />
    </div>
  );
}

function MenuItem({ label, checked = false }: { label: string; checked?: boolean }) {
  return (
    <div className={clsx("flex h-6 items-center border pl-1", checked ? "border-[#9b9b9b] bg-linear-to-b from-white to-[#ececec]" : "border-transparent")}>
      <span className="w-[15px]">
        {checked && (
          <svg viewBox="0 0 10 10" className="size-2.5" fill="none" stroke="#000" strokeWidth="2">
            <path d="m1 5.500 2.500 3L9 1" />
          </svg>
        )}
      </span>
      <span className="whitespace-nowrap">{label}</span>
    </div>
  );
}

function WorkspaceMenu() {
  return (
    <div className="absolute left-[1191px] top-[499px] h-[199px] w-[175px] border border-[#f3f3f3] bg-[#e5e5e5] px-px pt-[2px] text-[12px] font-medium text-black">
      <MenuItem label="草图与注释" />
      <MenuItem label="三维基础" />
      <MenuItem label="三维建模" />
      <MenuItem label="AutoCAD 经典" checked />
      <div className="my-[2px] h-px bg-[#a0a0a0]" />
      <MenuItem label="将当前工作空间另存为..." />
      <MenuItem label="工作空间设置..." />
      <MenuItem label="自定义..." />
      <MenuItem label="显示工作空间标签" />
    </div>
  );
}

export default function App() {
  return (
    <div className="relative flex h-[736px] w-[1366px] flex-col overflow-hidden bg-[#f0f0f0] font-['Noto_Sans','Noto_Sans_CJK_SC',sans-serif] leading-none text-[#111]">
      <Header />
      <FileTabs />
      <Toolbars />
      <Workspace />
      <CommandLine />
      <StatusBar />
      <Taskbar />
      <WorkspaceMenu />
      <div className="absolute left-[1356px] top-[54px] flex h-[59px] w-[14px] flex-col items-center justify-center rounded-[4px] border border-[#2e3240] bg-[#4d5366]">
        <div className="h-[22px] w-1 bg-[repeating-linear-gradient(#22252f_0_1px,transparent_1px_2.5px)]" />
        <div className="h-[26px] w-1 bg-[repeating-linear-gradient(transparent_0_1px,#4d5366_1px_2.5px),linear-gradient(#e5e05b,#5fd6d0)]" />
      </div>
    </div>
  );
}
